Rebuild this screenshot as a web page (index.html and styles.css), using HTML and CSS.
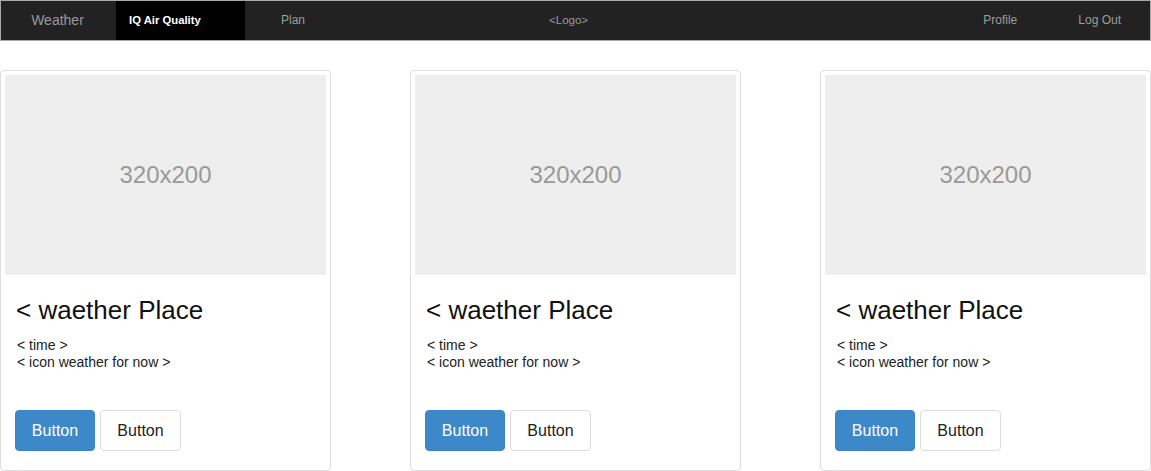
FILE: index.html
```html
<!DOCTYPE html>
<html>
<head>
<meta charset="utf-8">
<link rel="stylesheet" href="styles.css">
</head>
<body>
<nav class="navbar">
  <a class="nav-item nav-weather">Weather</a>
  <a class="nav-item nav-active">IQ Air Quality</a>
  <a class="nav-item nav-plan">Plan</a>
  <span class="nav-logo">&lt;Logo&gt;</span>
  <a class="nav-item nav-profile">Profile</a>
  <a class="nav-item nav-logout">Log Out</a>
</nav>
<main class="cards">
  <div class="card">
    <div class="thumb">320x200</div>
    <div class="card-body">
      <h3 class="card-title">&lt; waether Place</h3>
      <p class="card-text">&lt; time &gt;<br>&lt; icon weather for now &gt;</p>
      <div class="actions">
        <button class="btn btn-primary">Button</button>
        <button class="btn btn-default">Button</button>
      </div>
    </div>
  </div>
  <div class="card">
    <div class="thumb">320x200</div>
    <div class="card-body">
      <h3 class="card-title">&lt; waether Place</h3>
      <p class="card-text">&lt; time &gt;<br>&lt; icon weather for now &gt;</p>
      <div class="actions">
        <button class="btn btn-primary">Button</button>
        <button class="btn btn-default">Button</button>
      </div>
    </div>
  </div>
  <div class="card">
    <div class="thumb">320x200</div>
    <div class="card-body">
      <h3 class="card-title">&lt; waether Place</h3>
      <p class="card-text">&lt; time &gt;<br>&lt; icon weather for now &gt;</p>
      <div class="actions">
        <button class="btn btn-primary">Button</button>
        <button class="btn btn-default">Button</button>
      </div>
    </div>
  </div>
</main>
</body>
</html>
```
FILE: styles.css
```css
* { box-sizing: border-box; }
html, body { margin: 0; padding: 0; background: #fff; }
body { font-family: "Liberation Sans", Arial, sans-serif; color: #111; }

.navbar {
  display: flex;
  align-items: stretch;
  height: 41px;
  background: #222;
  border: 1px solid #a8a8a8;
}
.nav-item {
  display: flex;
  align-items: center;
  padding-bottom: 1px;
  font-size: 12px;
  color: #9d9d9d;
  text-decoration: none;
}
.nav-weather {
  width: 113px;
  justify-content: center;
  font-size: 14px;
  color: #999;
  margin-right: 2px;
}
.nav-active {
  width: 129px;
  padding-left: 13px;
  background: #000;
  color: #fff;
  font-weight: bold;
  font-size: 11.3px;
}
.nav-plan { padding-left: 36px; }
.nav-logo {
  display: flex;
  align-items: center;
  padding-bottom: 1px;
  margin-left: 244px;
  font-size: 11.5px;
  color: #999;
}
.nav-profile { margin-left: auto; }
.nav-logout { margin-left: 61px; margin-right: 29px; }

.cards {
  display: flex;
  justify-content: space-between;
  padding: 29px 0 0 0;
}
.card {
  width: 331px;
  height: 401px;
  border: 1px solid #ddd;
  border-radius: 4px;
  padding: 4px;
  display: flex;
  flex-direction: column;
}
.thumb {
  height: 200px;
  background: #eee;
  color: #999;
  font-size: 24px;
  display: flex;
  align-items: center;
  justify-content: center;
}
.card-body {
  padding: 21px 11px 0 11px;
  display: flex;
  flex-direction: column;
  flex: 1;
}
.card-title {
  margin: 0;
  font-size: 26px;
  font-weight: normal;
  line-height: 28px;
  color: #111;
}
.card-text {
  margin: 13px 0 0 0;
  padding-left: 1px;
  font-size: 14px;
  line-height: 17px;
  color: #222;
}
.actions {
  display: flex;
  gap: 5px;
  margin-top: 39px;
  margin-left: -1px;
}
.btn {
  font-family: "Liberation Sans", Arial, sans-serif;
  width: 80px;
  height: 41px;
  font-size: 16px;
  border-radius: 4px;
  padding: 0;
  cursor: pointer;
}
.btn-primary {
  background: #3d88c9;
  border: 1px solid #3a84c4;
  color: #fff;
}
.btn-default {
  width: 81px;
  background: #fff;
  border: 1px solid #ddd;
  color: #222;
}
```
